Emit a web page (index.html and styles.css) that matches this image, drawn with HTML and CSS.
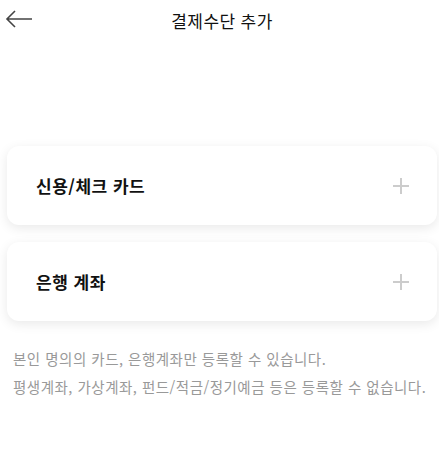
FILE: index.html
```html
<!DOCTYPE html>
<html lang="ko">
<head>
    <meta charset="UTF-8">
    <meta name="viewport" content="width=device-width, initial-scale=1.0">
    <title>결제수단 추가</title>
    <link rel="stylesheet" href="styles.css">
</head>
<body>
    <header class="top-bar">
        <a href="#" class="back-btn" aria-label="뒤로">
            <svg width="28" height="18" viewBox="0 0 28 18">
                <path d="M27 9H2M10 1L2 9l8 8" fill="none" stroke="#444" stroke-width="1.6"/>
            </svg>
        </a>
        <h1 class="title">결제수단 추가</h1>
    </header>

    <div class="method-list">
        <div class="method-card">
            <span class="method-name">신용/체크 카드</span>
            <span class="plus"></span>
        </div>
        <div class="method-card">
            <span class="method-name">은행 계좌</span>
            <span class="plus"></span>
        </div>
    </div>

    <div class="notice">
        <p>본인 명의의 카드, 은행계좌만 등록할 수 있습니다.</p>
        <p>평생계좌, 가상계좌, 펀드/적금/정기예금 등은 등록할 수 없습니다.</p>
    </div>
</body>
</html>
```

FILE: styles.css
```css
body {
    margin: 0;
    padding: 0;
    background: #fff;
    color: #111;
    font-family: 'Noto Sans CJK KR', 'Noto Sans', sans-serif;
}
.top-bar {
    position: relative;
    height: 40px;
    display: flex;
    align-items: center;
    justify-content: center;
}
.back-btn {
    position: absolute;
    left: 5px;
    top: 10px;
    display: block;
    line-height: 0;
}
.title {
    margin: 0;
    font-size: 17px;
    font-weight: 400;
    letter-spacing: 0.4px;
    margin-left: 5px;
}
.method-list {
    margin: 106px 2px 0 7px;
    display: flex;
    flex-direction: column;
    gap: 17px;
}
.method-card {
    height: 79px;
    background: #fff;
    border-radius: 12px;
    box-shadow: 0 3px 12px rgba(0, 0, 0, 0.09);
    display: flex;
    align-items: center;
    justify-content: space-between;
    padding: 0 28px 0 29px;
}
.method-name {
    font-size: 17px;
    font-weight: 700;
    letter-spacing: 0.5px;
}
.plus {
    position: relative;
    width: 16px;
    height: 16px;
}
.plus::before,
.plus::after {
    content: "";
    position: absolute;
    background: #ccc;
}
.plus::before {
    left: 0;
    top: 7px;
    width: 16px;
    height: 2px;
}
.plus::after {
    left: 7px;
    top: 0;
    width: 2px;
    height: 16px;
}
.notice {
    margin: 24px 0 0 13px;
    color: #999;
    font-size: 14.5px;
    letter-spacing: 0.5px;
}
.notice p {
    margin: 0;
    line-height: 28px;
}
```
